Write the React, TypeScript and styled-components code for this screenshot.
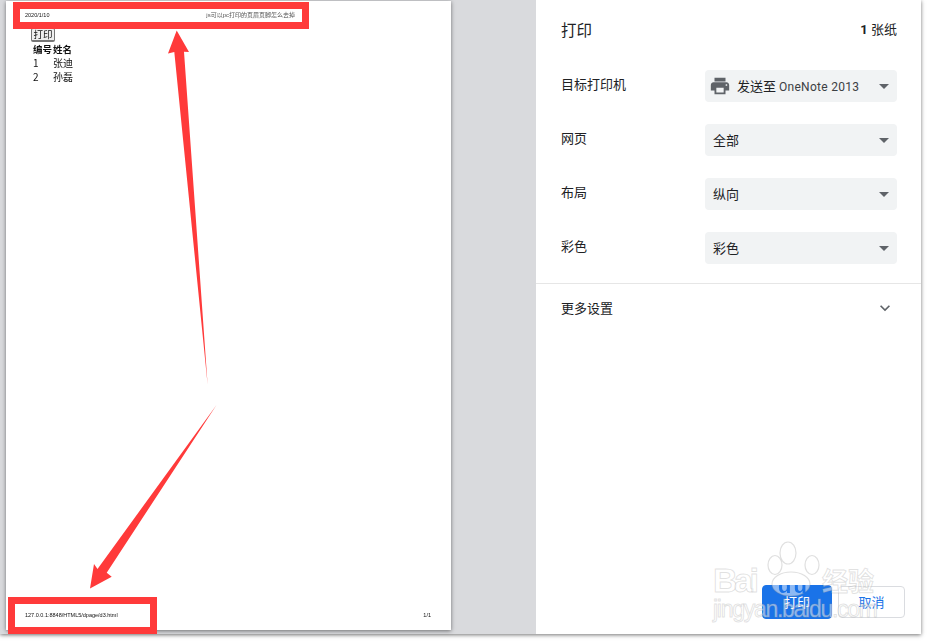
import React from 'react';
import styled, { createGlobalStyle } from 'styled-components';

const GlobalStyle = createGlobalStyle`
  html, body {
    margin: 0;
    padding: 0;
    background: #fff;
  }
  body {
    width: 929px;
    height: 644px;
    overflow: hidden;
    font-family: "Roboto", "Noto Sans CJK SC", sans-serif;
  }
`;

const Screen = styled.div`
  position: relative;
  width: 929px;
  height: 644px;
  overflow: hidden;
  background: #fff;
`;

const Dialog = styled.div`
  display: flex;
  width: 921px;
  height: 634px;
  box-shadow: 0 1px 4px rgba(0, 0, 0, 0.55);
`;

const Preview = styled.div`
  width: 536px;
  flex: none;
  box-sizing: border-box;
  padding: 1px 85px 4px 6px;
  background: #d9dadd;
`;

const Sheet = styled.div`
  display: flex;
  flex-direction: column;
  box-sizing: border-box;
  height: 629px;
  padding: 10px 20px 10px 19px;
  background: #fff;
  box-shadow: 0 1px 4px rgba(0, 0, 0, 0.5);
  color: #111;
`;

const SheetHeader = styled.div`
  display: flex;
  justify-content: space-between;
  height: 9px;
  padding-right: 136px;
  filter: blur(0.35px);
  font: 5.5px/9px "Liberation Sans", "Noto Sans CJK SC", sans-serif;
`;

const HeaderTitle = styled.span`
  font-size: 6px;
  color: #555;
`;

const SheetBody = styled.div`
  display: flex;
  flex-direction: column;
  align-items: flex-start;
  padding: 8px 0 0 6px;
  filter: blur(0.35px);
`;

const PageButton = styled.div`
  box-sizing: border-box;
  width: 24px;
  height: 14px;
  border: 1px solid #767676;
  border-bottom-width: 2px;
  border-radius: 2px;
  background: #efefef;
  text-align: center;
  font: 9.5px/11px "Noto Sans CJK SC", sans-serif;
`;

const PageTable = styled.div`
  display: grid;
  grid-template-columns: 20px 20px;
  margin: 0 0 0 2px;
  font: 10px/14px "Noto Sans CJK SC", sans-serif;
`;

const HeadCell = styled.span`
  font-size: 9.5px;
  font-weight: 700;
`;

const SheetFooter = styled.div`
  display: flex;
  justify-content: space-between;
  margin-top: auto;
  filter: blur(0.35px);
  font: 5.5px/9px "Liberation Sans", sans-serif;
`;

const Side = styled.div`
  display: flex;
  flex-direction: column;
  flex: 1;
  background: #fff;
  color: #202124;
`;

const SideHeader = styled.div`
  display: flex;
  justify-content: space-between;
  align-items: center;
  height: 22px;
  padding: 18px 24px 0 25px;
`;

const Title = styled.div`
  font: 15.5px/22px "Noto Sans CJK SC", sans-serif;
`;

const SheetCount = styled.div`
  margin-top: 1px;
  font: 13px/22px "Roboto", "Noto Sans CJK SC", sans-serif;

  b {
    font-weight: 700;
  }
`;

const Settings = styled.div`
  display: flex;
  flex-direction: column;
  gap: 22px;
  padding: 30px 24px 19px 25px;
  border-bottom: 1px solid #e6e6e6;
`;

const Row = styled.div`
  display: grid;
  grid-template-columns: 144px 192px;
  align-items: center;
`;

const Label = styled.div`
  margin-top: -4px;
  font: 13px/20px "Noto Sans CJK SC", sans-serif;
`;

const Select = styled.div`
  display: flex;
  align-items: center;
  box-sizing: border-box;
  height: 32px;
  padding: 0 8px;
  border-radius: 4px;
  background: #f1f3f4;
  font: 13px/20px "Noto Sans CJK SC", sans-serif;
`;

const SelectIcon = styled.svg`
  width: 22px;
  height: 22px;
  margin: 0 6px 0 -4px;
  fill: #5f6368;
  flex: none;
`;

const SelectText = styled.span`
  flex: 1;
`;

const Latin = styled.span`
  font: 12px/20px "Roboto", sans-serif;
  letter-spacing: 0.3px;
  color: #3c4043;
`;

const Caret = styled.i`
  width: 0;
  height: 0;
  border-left: 5px solid transparent;
  border-right: 5px solid transparent;
  border-top: 5px solid #5f6368;
`;

const MoreRow = styled.div`
  display: flex;
  justify-content: space-between;
  align-items: center;
  height: 50px;
  padding: 0 25px;
  font: 13px/20px "Noto Sans CJK SC", sans-serif;

  span {
    margin-top: -2px;
  }
`;

const Chevron = styled.svg`
  width: 20px;
  height: 20px;
  margin-right: 1px;
  margin-top: -2px;
  fill: #5f6368;
`;

const Footer = styled.div`
  display: flex;
  justify-content: flex-end;
  align-items: center;
  gap: 6px;
  margin-top: auto;
  margin-right: 16px;
  margin-bottom: 15px;
`;

const ActionButton = styled.div<{ $primary?: boolean }>`
  box-sizing: border-box;
  width: ${p => (p.$primary ? 70 : 67)}px;
  height: ${p => (p.$primary ? 34 : 32)}px;
  border-radius: 4px;
  border: 1px solid ${p => (p.$primary ? '#1a73e8' : '#dadce0')};
  background: ${p => (p.$primary ? '#1a73e8' : '#fff')};
  color: ${p => (p.$primary ? '#fff' : '#1a73e8')};
  text-align: center;
  font: 13px/${p => (p.$primary ? 32 : 30)}px "Noto Sans CJK SC", sans-serif;
`;

const RedBox = styled.div<{ $left: number; $top: number; $width: number; $height: number }>`
  position: absolute;
  left: ${p => p.$left}px;
  top: ${p => p.$top}px;
  width: ${p => p.$width}px;
  height: ${p => p.$height}px;
  box-sizing: border-box;
  border: 7px solid #ff3a3a;
`;

const Overlay = styled.svg`
  position: absolute;
  left: 0;
  top: 0;
  width: 929px;
  height: 644px;
  pointer-events: none;
`;

const WatermarkText = styled.text`
  fill: rgba(255, 255, 255, 0.5);
  stroke: rgba(150, 150, 150, 0.28);
  stroke-width: 1;
  font-family: "Liberation Sans", "Noto Sans CJK SC", sans-serif;
`;

const PawShape = styled.ellipse`
  fill: rgba(255, 255, 255, 0.5);
  stroke: rgba(150, 150, 150, 0.3);
  stroke-width: 1.2;
`;

const options = [
  { label: '网页', value: '全部' },
  { label: '布局', value: '纵向' },
  { label: '彩色', value: '彩色' },
];

const App = () => {
  return (
    <Screen>
      <GlobalStyle />
      <Dialog>
        <Preview>
          <Sheet>
            <SheetHeader>
              <span>2020/1/10</span>
              <HeaderTitle>js可以pc打印的页眉页脚怎么去掉</HeaderTitle>
            </SheetHeader>
            <SheetBody>
              <PageButton>打印</PageButton>
              <PageTable>
                <HeadCell>编号</HeadCell>
                <HeadCell>姓名</HeadCell>
                <span>1</span>
                <span>张迪</span>
                <span>2</span>
                <span>孙磊</span>
              </PageTable>
            </SheetBody>
            <SheetFooter>
              <span>127.0.0.1:8848/HTML5/dpage/d3.html</span>
              <span>1/1</span>
            </SheetFooter>
          </Sheet>
        </Preview>
        <Side>
          <SideHeader>
            <Title>打印</Title>
            <SheetCount><b>1</b> 张纸</SheetCount>
          </SideHeader>
          <Settings>
            <Row>
              <Label>目标打印机</Label>
              <Select>
                <SelectIcon viewBox="0 0 24 24">
                  <path d="M19 8H5c-1.66 0-3 1.34-3 3v6h4v4h12v-4h4v-6c0-1.66-1.34-3-3-3zm-3 11H8v-5h8v5zm3-7c-.55 0-1-.45-1-1s.45-1 1-1 1 .45 1 1-.45 1-1 1zm-1-9H6v4h12V3z" />
                </SelectIcon>
                <SelectText>发送至 <Latin>OneNote 2013</Latin></SelectText>
                <Caret />
              </Select>
            </Row>
            {options.map(o => (
              <Row key={o.label}>
                <Label>{o.label}</Label>
                <Select>
                  <SelectText>{o.value}</SelectText>
                  <Caret />
                </Select>
              </Row>
            ))}
          </Settings>
          <MoreRow>
            <span>更多设置</span>
            <Chevron viewBox="0 0 24 24">
              <path d="M16.59 8.59L12 13.17 7.41 8.59 6 10l6 6 6-6z" />
            </Chevron>
          </MoreRow>
          <Footer>
            <ActionButton $primary>打印</ActionButton>
            <ActionButton>取消</ActionButton>
          </Footer>
        </Side>
      </Dialog>

      <RedBox $left={13} $top={2} $width={296} $height={27} />
      <RedBox $left={8} $top={597} $width={149} $height={37} />

      <Overlay viewBox="0 0 929 644">
        {/* annotation arrows */}
        <polygon fill="#ff3a3a" points="176.7,30.5 189,52 184,51.7 207.6,384.5 174.3,52 168,53.5" />
        <polygon fill="#ff3a3a" points="216.5,405 106.7,572.7 111.7,576.7 90,588.5 94,564 97.5,569" />

        {/* watermark, du is cut out of the paw pad */}
        <mask id="paw-pad">
          <rect x="760" y="565" width="60" height="40" fill="#fff" />
          <text x="778" y="593" fontSize="22" fontWeight="700" fontFamily="Liberation Sans" fill="#000" textLength="29">du</text>
        </mask>
        <PawShape cx="788" cy="553" rx="8" ry="11" />
        <PawShape cx="775" cy="565" rx="7" ry="9.5" />
        <PawShape cx="812" cy="565" rx="7" ry="9.5" />
        <PawShape cx="791" cy="584" rx="19" ry="12" mask="url(#paw-pad)" />
        <WatermarkText x="713" y="592" fontSize="34" fontWeight="700" textLength="46">Bai</WatermarkText>
        <WatermarkText x="822" y="591" fontSize="26" fontWeight="700">经验</WatermarkText>
        <WatermarkText x="713" y="617" fontSize="23" textLength="165">jingyan.baidu.com</WatermarkText>
      </Overlay>
    </Screen>
  );
};

export default App;
